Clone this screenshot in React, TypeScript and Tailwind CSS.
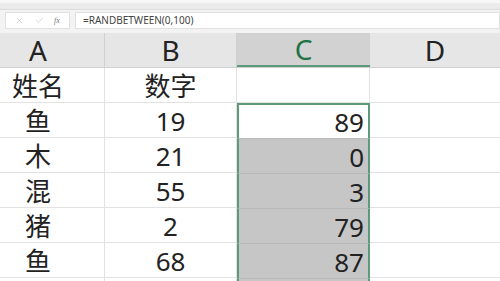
import { X, Check } from "lucide-react"

const rows = [
  { name: "姓名", num: "数字", val: "" },
  { name: "鱼", num: "19", val: "89" },
  { name: "木", num: "21", val: "0" },
  { name: "混", num: "55", val: "3" },
  { name: "猪", num: "2", val: "79" },
  { name: "鱼", num: "68", val: "87" },
  { name: "", num: "", val: "" },
]

const font = { fontFamily: '"Noto Sans", "Noto Sans CJK SC", sans-serif' }

export default function App() {
  return (
    <div className="w-[500px] h-[281px] overflow-hidden bg-white" style={font}>
      {/* ribbon edge */}
      <div className="h-[3px] bg-[#f7f7f7]" />
      <div className="h-[7px] bg-[#ebebeb] border-b border-[#dcdcdc]" />

      {/* formula bar */}
      <div className="h-[23px] bg-[#f3f3f3] flex items-start pt-[2px] pl-[5px] gap-[5px]">
        <div className="w-[65px] h-[17px] bg-white border border-[#e0e0e0] flex items-center justify-around px-1 text-[#b8b8b8]">
          <X size={9} strokeWidth={1.5} />
          <Check size={9} strokeWidth={1.5} />
          <span className="text-[8px] italic text-[#777]" style={{ fontFamily: '"Liberation Serif", serif' }}>fx</span>
        </div>
        <div className="flex-1 h-[17px] bg-white border border-[#e0e0e0] flex items-center pl-[7px] text-[10px] text-[#444]">
          =RANDBETWEEN(0,100)
        </div>
      </div>

      {/* column headers */}
      <div className="flex -ml-[28px] h-[35px] bg-[#e6e6e6] border-b border-[#cfcfcf] text-[28px] leading-none">
        <div className="w-[133px] flex items-center justify-center text-[#222] border-r border-[#d0d0d0]">A</div>
        <div className="w-[132px] flex items-center justify-center text-[#222] border-r border-[#d0d0d0]">B</div>
        <div className="w-[133px] flex items-center justify-center bg-[#d2d2d2] text-[#217346] border-b-2 border-[#5d9b78]">C</div>
        <div className="w-[130px] flex items-center justify-center text-[#222]">D</div>
      </div>

      {/* cells */}
      {rows.map((r, i) => {
        const sel = i >= 1
        const active = i === 1
        return (
          <div key={i} className="flex -ml-[28px] h-[35px] text-[26px] leading-none text-[#222]">
            <div className="w-[133px] flex items-end justify-center pb-[3px] border-r border-b border-[#e2e2e2]">{r.name}</div>
            <div className="w-[132px] flex items-end justify-center pb-[3px] border-r border-b border-[#e2e2e2]">{r.num}</div>
            <div
              className={
                "w-[133px] flex items-end justify-end pr-[4px] pb-[3px] " +
                (sel
                  ? "border-x-2 border-[#5d9b78] " + (active ? "bg-white border-t-2 " : "bg-[#c6c6c6] border-t border-t-[#b8b8b8] ")
                  : "border-r border-b border-[#e2e2e2]")
              }
            >
              {r.val}
            </div>
            <div className="w-[130px] border-b border-[#e2e2e2]" />
          </div>
        )
      })}
    </div>
  )
}
